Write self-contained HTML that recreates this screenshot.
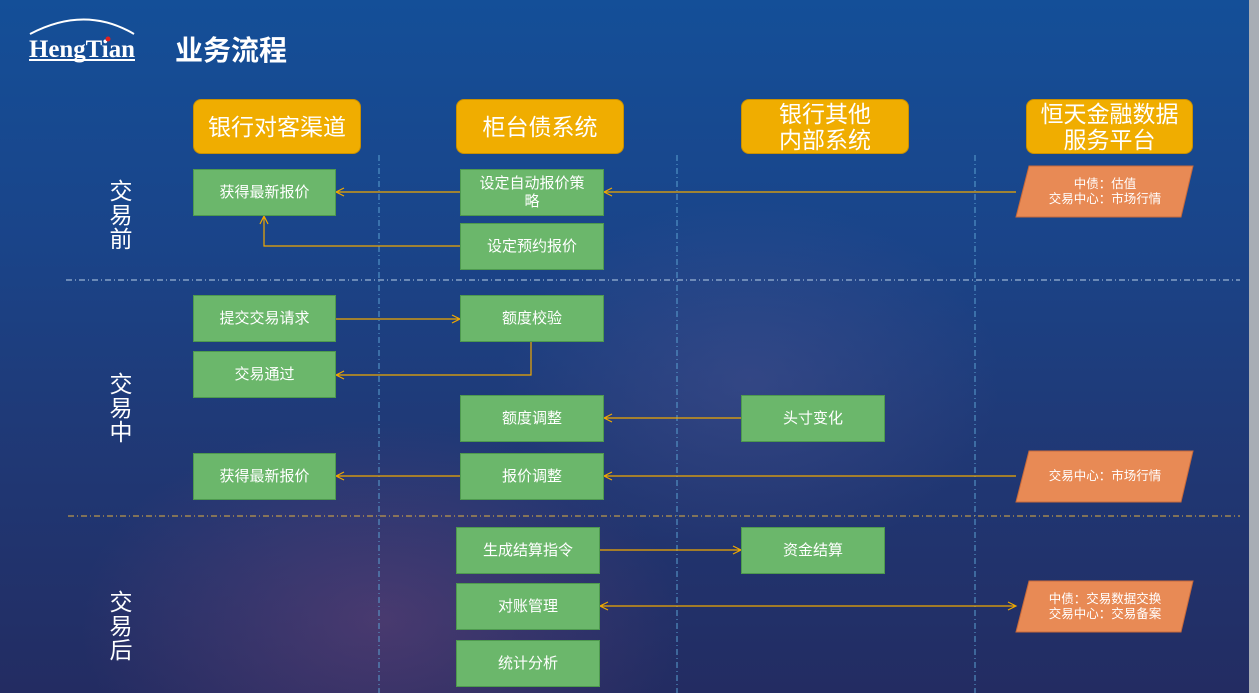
<!DOCTYPE html><html><head><meta charset="utf-8"><style>
body{margin:0;width:1259px;height:693px;overflow:hidden;font-family:"Liberation Sans","Noto Sans CJK SC",sans-serif;}
#bg{position:absolute;left:0;top:0;width:1249px;height:693px;background:radial-gradient(ellipse 300px 200px at 380px 620px,rgba(120,70,120,.45),transparent),radial-gradient(ellipse 250px 180px at 750px 380px,rgba(90,90,150,.35),transparent),linear-gradient(180deg,#144f98 0%,#1a4489 35%,#1f3a78 60%,#232c62 100%);}
#rs{position:absolute;left:1249px;top:0;width:10px;height:693px;background:#a8adb5}
.h{position:absolute;background:#f0ad00;border:1px solid #c98f00;border-radius:8px;color:#fff;font-size:23px;line-height:26px;text-align:center;display:flex;align-items:center;justify-content:center;box-sizing:border-box}
.g{position:absolute;background:#6bb76b;border:1px solid #4e9a4e;color:#fff;font-size:15px;display:flex;align-items:center;justify-content:center;text-align:center;box-sizing:border-box;line-height:18px}
.l{position:absolute;color:#fff;font-size:23px;line-height:24px;width:30px;text-align:center}
.p{position:absolute;color:#fff;font-size:12.5px;line-height:15px;text-align:center;display:flex;align-items:center;justify-content:center}
</style></head><body>
<div id="bg"></div><div id="rs"></div>
<svg style="position:absolute;left:0;top:0" width="1259" height="693">
<path d="M30 34 Q85 5 134 34" stroke="#fff" stroke-width="2" fill="none"/>
<text x="29" y="57" fill="#fff" font-family="Liberation Serif" font-weight="bold" font-size="25" textLength="106" lengthAdjust="spacingAndGlyphs">HengTian</text>
<circle cx="108" cy="39" r="2.5" fill="#e02020"/>
<line x1="29" y1="60" x2="135" y2="60" stroke="#fff" stroke-width="2"/>
<text x="175" y="60" fill="#fff" font-weight="bold" font-size="28" font-family="Liberation Sans,Noto Sans CJK SC,sans-serif">业务流程</text>
<g stroke="#5aa0d0" stroke-width="1" stroke-dasharray="6 3 1 3" fill="none">
<line x1="379" y1="155" x2="379" y2="693"/><line x1="677" y1="155" x2="677" y2="693"/><line x1="975" y1="155" x2="975" y2="693"/>
</g>
<line x1="66" y1="280" x2="1240" y2="280" stroke="#b8d0e8" stroke-dasharray="6 3 1 3"/>
<line x1="68" y1="516" x2="1240" y2="516" stroke="#e0b040" stroke-dasharray="6 3 1 3"/>
<g stroke="#f0a800" stroke-width="1.2" fill="none">
<path d="M1016 192H604M460 192H336"/><path d="M612 188L604 192L612 196M344 188L336 192L344 196"/>
<path d="M460 246H264V216M260 224L264 216L268 224"/>
<path d="M336 319H460M452 315L460 319L452 323"/>
<path d="M531 342V375H336M344 371L336 375L344 379"/>
<path d="M741 418H604M612 414L604 418L612 422"/>
<path d="M1016 476H604M460 476H336M612 472L604 476L612 480M344 472L336 476L344 480"/>
<path d="M599 550H741M733 546L741 550L733 554"/>
<path d="M600 606H1016M608 602L600 606L608 610M1008 602L1016 606L1008 610"/>
</g>
<g fill="#e88a55" stroke="#c86a3a">
<polygon points="1029,166 1193,166 1181,217 1016,217"/>
<polygon points="1029,451 1193,451 1181,502 1016,502"/>
<polygon points="1029,581 1193,581 1181,632 1016,632"/>
</g>
</svg>
<div class="h" style="left:193px;top:99px;width:168px;height:55px">银行对客渠道</div>
<div class="h" style="left:456px;top:99px;width:168px;height:55px">柜台债系统</div>
<div class="h" style="left:741px;top:99px;width:168px;height:55px">银行其他<br>内部系统</div>
<div class="h" style="left:1026px;top:99px;width:167px;height:55px">恒天金融数据<br>服务平台</div>
<div class="l" style="left:106px;top:179px">交<br>易<br>前</div>
<div class="l" style="left:106px;top:372px">交<br>易<br>中</div>
<div class="l" style="left:106px;top:590px">交<br>易<br>后</div>
<div class="g" style="left:193px;top:169px;width:143px;height:47px">获得最新报价</div>
<div class="g" style="left:460px;top:169px;width:144px;height:47px">设定自动报价策<br>略</div>
<div class="g" style="left:460px;top:223px;width:144px;height:47px">设定预约报价</div>
<div class="g" style="left:193px;top:295px;width:143px;height:47px">提交交易请求</div>
<div class="g" style="left:460px;top:295px;width:144px;height:47px">额度校验</div>
<div class="g" style="left:193px;top:351px;width:143px;height:47px">交易通过</div>
<div class="g" style="left:460px;top:395px;width:144px;height:47px">额度调整</div>
<div class="g" style="left:741px;top:395px;width:144px;height:47px">头寸变化</div>
<div class="g" style="left:193px;top:453px;width:143px;height:47px">获得最新报价</div>
<div class="g" style="left:460px;top:453px;width:144px;height:47px">报价调整</div>
<div class="g" style="left:456px;top:527px;width:144px;height:47px">生成结算指令</div>
<div class="g" style="left:741px;top:527px;width:144px;height:47px">资金结算</div>
<div class="g" style="left:456px;top:583px;width:144px;height:47px">对账管理</div>
<div class="g" style="left:456px;top:640px;width:144px;height:47px">统计分析</div>
<div class="p" style="left:1020px;top:166px;width:170px;height:51px">中债：估值<br>交易中心：市场行情</div>
<div class="p" style="left:1020px;top:451px;width:170px;height:51px">交易中心：市场行情</div>
<div class="p" style="left:1020px;top:581px;width:170px;height:51px">中债：交易数据交换<br>交易中心：交易备案</div>
</body></html>
